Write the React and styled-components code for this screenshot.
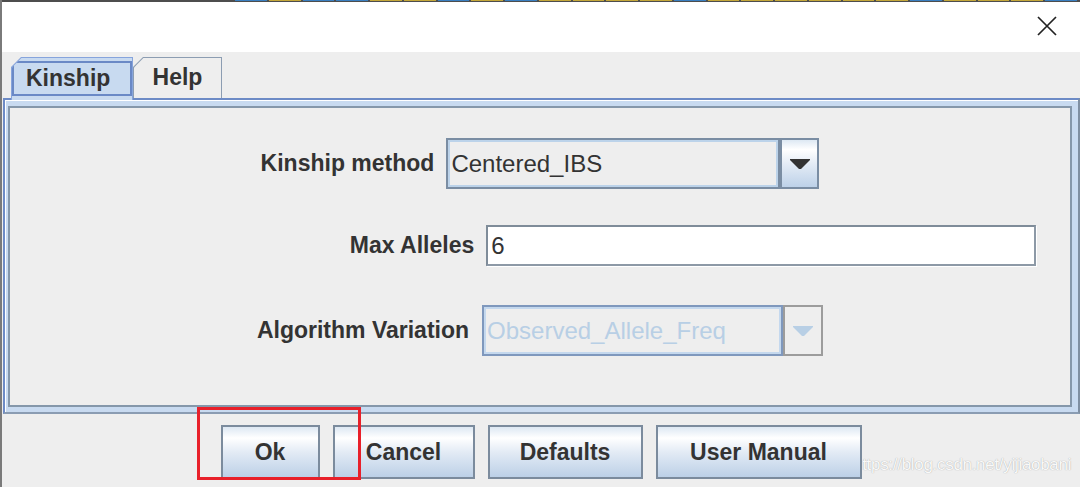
import React from 'react';
import styled, { createGlobalStyle } from 'styled-components';

const GlobalStyle = createGlobalStyle`
  html, body {
    margin: 0;
    padding: 0;
    background: #eeeeee;
  }
  body {
    font-family: "Liberation Sans", Arial, sans-serif;
  }
  * {
    box-sizing: border-box;
  }
`;

// colours of the taskbar strip peeking above the dialog
const B = '#3a7fc0';
const Y = '#c4a73a';
const stripColors = [B, Y, B, B, Y, Y, B, Y, B, Y, Y, Y, Y, B, Y, Y, Y, Y, Y, Y, B, Y, Y, Y, B];

const buttons = [
  { label: 'Ok', w: 99 },
  { label: 'Cancel', w: 142 },
  { label: 'Defaults', w: 155 },
  { label: 'User Manual', w: 206 },
];

const Window = styled.div`
  position: relative;
  width: 1080px;
  height: 487px;
  overflow: hidden;
  background: #eeeeee;
  border-left: 2px solid #7a7a7a;
  display: flex;
  flex-direction: column;
`;

const TopStrip = styled.div`
  display: flex;
  align-items: flex-start;
  height: 2px;
  padding-left: 233px;
  background: #4d4d4d;
  flex-shrink: 0;
`;

const Segment = styled.div`
  flex: 0 0 31.75px;
  height: 1px;
  margin-right: 2px;
  background: ${p => p.$color};
`;

const TitleBar = styled.div`
  height: 50px;
  flex-shrink: 0;
  background: #ffffff;
  display: flex;
  justify-content: flex-end;
  align-items: flex-start;
  padding: 14px 23px 0 0;
`;

const CloseButton = styled.div`
  width: 20px;
  height: 20px;
  display: flex;
`;

const TabStrip = styled.div`
  position: relative;
  z-index: 2;
  height: 46px;
  flex-shrink: 0;
  display: flex;
  align-items: flex-end;
  padding-left: 9px;
`;

const TabShape = styled.div`
  width: ${p => p.$w}px;
  height: ${p => (p.$selected ? 43 : 41)}px;
  margin-bottom: ${p => (p.$selected ? -2 : 0)}px;
  padding: 1px 1px 0 1px;
  background: ${p => (p.$selected ? '#86a4dc' : '#8c9db2')};
  clip-path: polygon(10px 0, 100% 0, 100% 100%, 0 100%, 0 10px);
  display: flex;
`;

const TabFace = styled.div`
  flex: 1;
  display: flex;
  align-items: center;
  justify-content: ${p => (p.$selected ? 'flex-start' : 'center')};
  padding: ${p => (p.$selected ? '3px 0 4px 0' : '0 0 2px 0')};
  background: ${p => (p.$selected ? '#c8daf0' : '#eeeeee')};
  clip-path: polygon(9.4px 0, 100% 0, 100% 100%, 0 100%, 0 9.4px);
`;

const FocusRect = styled.div`
  flex: 1;
  align-self: stretch;
  display: flex;
  align-items: center;
  padding-left: 12px;
  border: 2px solid #6a89c6;
`;

const TabLabel = styled.span`
  font-size: 23px;
  font-weight: bold;
  color: #333333;
  white-space: nowrap;
`;

const Panel = styled.div`
  position: relative;
  z-index: 1;
  margin-left: 1px;
  height: 316px;
  flex-shrink: 0;
  background: #c8daf0;
  border-top: 2px solid #6d8bc6;
  border-left: 2px solid #6d8bc6;
  border-right: 2px solid #7f8fa2;
  border-bottom: 2px solid #8a9cb2;
  padding: 6px 6px 5px 3px;
  box-shadow: inset 1px 1px 0 #ffffff;
`;

const Content = styled.div`
  height: 100%;
  background: #eeeeee;
  border: 2px solid #8597aa;
  display: flex;
  flex-direction: column;
  padding-top: 30px;
`;

const Row = styled.div`
  display: flex;
  align-items: center;
  justify-content: center;
  gap: ${p => p.$gap || 12}px;
  margin-top: ${p => p.$top || 0}px;
  padding-left: ${p => p.$shift || 0}px;
  height: ${p => p.$h}px;
`;

const Label = styled.span`
  font-size: 23px;
  font-weight: bold;
  color: #333333;
  white-space: nowrap;
`;

const Combo = styled.div`
  display: flex;
  width: ${p => p.$w}px;
  height: 51px;
`;

const ComboField = styled.div`
  flex: 1;
  display: flex;
  align-items: center;
  padding-left: 3px;
  background: #eeeeee;
  border: 2px solid ${p => (p.$disabled ? '#7f98bd' : '#7a8da3')};
  box-shadow: inset 0 0 0 2px ${p => (p.$disabled ? '#c4d8ee' : '#bcd3ea')};
  font-size: 24px;
  color: ${p => (p.$disabled ? '#b8cfe5' : '#333333')};
  white-space: nowrap;
  overflow: hidden;
`;

const ComboArrow = styled.div`
  width: ${p => p.$w}px;
  display: flex;
  align-items: center;
  justify-content: center;
  border: 2px solid ${p => (p.$disabled ? '#9c9c9c' : '#7a8da3')};
  background: ${p =>
    p.$disabled
      ? '#eeeeee'
      : 'linear-gradient(#dde8f3 0%, #ffffff 20%, #e4ecf6 50%, #bdd1e8 100%)'};
`;

const TextField = styled.div`
  width: 550px;
  height: 41px;
  display: flex;
  align-items: center;
  padding-left: 3px;
  background: #ffffff;
  border-top: 2px solid #7f8c99;
  border-left: 2px solid #7f8c99;
  border-right: 2px solid #8d99a6;
  border-bottom: 2px solid #8d99a6;
  box-shadow: 1px 1px 0 #ffffff;
  font-size: 24px;
  color: #333333;
`;

const ButtonRow = styled.div`
  position: relative;
  display: flex;
  justify-content: center;
  gap: 13px;
  padding-top: 11px;
`;

const Button = styled.div`
  position: relative;
  z-index: 1;
  width: ${p => p.$w}px;
  height: 54px;
  display: flex;
  align-items: center;
  justify-content: center;
  border: 2px solid #7b8b9d;
  background: linear-gradient(#dde8f3 0%, #ffffff 22%, #e3ebf5 50%, #bcd0e7 100%);
  font-size: 23px;
  font-weight: bold;
  color: #333333;
  white-space: nowrap;
`;

const Watermark = styled.div`
  position: absolute;
  z-index: 0;
  left: 851px;
  top: 455px;
  font-size: 17px;
  letter-spacing: -0.3px;
  color: #f9f9f9;
  text-shadow: 0 0 1px #999999;
  white-space: nowrap;
`;

const RedBox = styled.div`
  position: absolute;
  z-index: 3;
  left: 195px;
  top: 407px;
  width: 164px;
  height: 73px;
  border: 3px solid #e8202a;
  pointer-events: none;
`;

function Arrow({ color }) {
  return (
    <svg width="20" height="10" viewBox="0 0 20 10">
      <polygon points="0,0 20,0 20,1 11,10 9,10 0,1" fill={color} />
    </svg>
  );
}

export default function App() {
  return (
    <>
      <GlobalStyle />
      <Window>
        <TopStrip>
          {stripColors.map((c, i) => (
            <Segment key={i} $color={c} />
          ))}
        </TopStrip>
        <TitleBar>
          <CloseButton>
            <svg width="20" height="20" viewBox="0 0 20 20">
              <path d="M1 1 L19 19 M19 1 L1 19" stroke="#222" strokeWidth="1.7" fill="none" />
            </svg>
          </CloseButton>
        </TitleBar>

        <TabStrip>
          <TabShape $w={122} $selected>
            <TabFace $selected>
              <FocusRect>
                <TabLabel>Kinship</TabLabel>
              </FocusRect>
            </TabFace>
          </TabShape>
          <TabShape $w={89}>
            <TabFace>
              <TabLabel>Help</TabLabel>
            </TabFace>
          </TabShape>
        </TabStrip>

        <Panel>
          <Content>
            <Row $h={51}>
              <Label>Kinship method</Label>
              <Combo $w={373}>
                <ComboField>Centered_IBS</ComboField>
                <ComboArrow $w={39}>
                  <Arrow color="#333333" />
                </ComboArrow>
              </Combo>
            </Row>
            <Row $h={41} $top={36} $shift={306}>
              <Label>Max Alleles</Label>
              <TextField>6</TextField>
            </Row>
            <Row $h={51} $top={39} $gap={13}>
              <Label>Algorithm Variation</Label>
              <Combo $w={341}>
                <ComboField $disabled>Observed_Allele_Freq</ComboField>
                <ComboArrow $w={40} $disabled>
                  <Arrow color="#b8cfe5" />
                </ComboArrow>
              </Combo>
            </Row>
          </Content>
        </Panel>

        <ButtonRow>
          {buttons.map(b => (
            <Button key={b.label} $w={b.w}>{b.label}</Button>
          ))}
        </ButtonRow>

        <Watermark>https://blog.csdn.net/yijiaobani</Watermark>
        <RedBox />
      </Window>
    </>
  );
}
